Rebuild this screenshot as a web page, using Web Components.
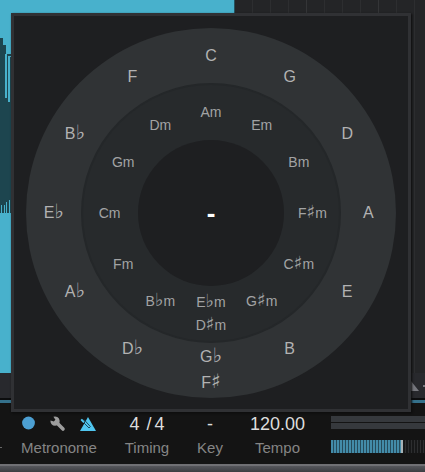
<!DOCTYPE html>
<html lang="en">
<head>
<meta charset="utf-8">
<meta name="viewport" content="width=device-width, initial-scale=1">
<title>Key selector</title>
<style>
html,body{margin:0;height:100%;background:#141414;font-family:"Liberation Sans",Arial,"DejaVu Sans",sans-serif;color:#999}
</style>
</head>
<body>
<daw-window></daw-window>

<script>
class BaseElement extends HTMLElement {
  constructor() {
    super();
    this.attachShadow({ mode: 'open' });
  }
  connectedCallback() { this.shadowRoot.innerHTML = this.render(); }
}

/* Timeline with an audio clip behind the popup */
customElements.define('arrange-view', class extends BaseElement {
  render() {
    return `<style>
      :host{display:flex;flex-direction:column;position:relative;flex:1;min-height:0}
      .track{flex:1;display:flex;min-height:0;background:#242527}
      .clip{flex:0 0 235px;box-sizing:border-box;border-right:1px solid #25525e;background:#48b1cc}
      .grid{flex:1;background:
        repeating-linear-gradient(90deg,transparent 0 71px,#343537 71px 72px),
        repeating-linear-gradient(90deg,#242527 0 17px,#2d2e30 17px 18px)}
      .scroll{height:25px;display:flex;justify-content:flex-end;background:#28292d}
      .line{height:3px;border-top:2px solid #0c0d0e;background:#35718b}
      svg{display:block}
    </style>
    <div class="track">
      <div class="clip"><svg width="12" height="240" shape-rendering="crispEdges" aria-hidden="true">
        <path fill="#1d454f" d="M0 38h3v7h3v9h5v159H0z"/>
        <path fill="#48b1cc" d="M5 54h2v44H5zM8 56h2v46H8zM7 45h1v8H7zM10 56h1v1h-1zM1 205h1v8H1zM4 205h1v8H4zM6 202h1v11H6zM9 200h1v13H9z"/>
      </svg></div>
      <div class="grid"></div>
    </div>
    <div class="scroll"><svg width="16" height="25" aria-hidden="true"><path fill="#77787e" d="M2 8l8 10H2zM14 12h2v2h-2z"/></svg></div>
    <div class="line"></div>
    <slot></slot>`;
  }
});

customElements.define('key-label', class extends BaseElement {
  render() {
    const rows = this.getAttribute('keys').split(',')
      .map(k => `<button>${k.replace(/[♯♭]/, '<span class="accidental">$&</span>')}</button>`).join('');
    return `<style>
      :host{position:absolute;display:flex;flex-direction:column;align-items:center;
        transform:translate(-50%,-50%);
        left:calc(50% + sin(var(--angle)) * var(--radius));
        top:calc(50% - cos(var(--angle)) * var(--radius))}
      button{all:unset;cursor:pointer;white-space:nowrap;font-size:var(--size);height:var(--row);line-height:var(--row)}
      .accidental{font-family:"DejaVu Sans",sans-serif;font-size:var(--accidental);line-height:1px}
    </style>${rows}`;
  }
});

customElements.define('key-wheel', class extends BaseElement {
  render() {
    const major = ['C','G','D','A','E','B','G♭,F♯','D♭','A♭','E♭','B♭','F'];
    const minor = ['Am','Em','Bm','F♯m','C♯m','G♯m','E♭m,D♯m','B♭m','Fm','Cm','Gm','Dm'];
    const ring = list => list.map((k, i) => `<key-label keys="${k}" style="--angle:${i * 30}deg"></key-label>`).join('');
    return `<style>
      :host{display:block;position:relative;width:100%;aspect-ratio:1;color:#b2b2b2}
      svg{display:block;width:100%;height:100%}
      .major{--radius:42.5%;--size:16px;--accidental:20px;--row:26px}
      .minor{--radius:27.4%;--size:14px;--accidental:18px;--row:23px;color:#a2a3a4}
      .major,.minor{display:contents}
      output{position:absolute;inset:0;display:flex;align-items:center;justify-content:center;font-size:26px;font-weight:bold;color:#fff}
      output{pointer-events:none}
    </style>
    <svg viewBox="0 0 370 370" aria-hidden="true">
      <circle cx="185" cy="185" r="185" fill="#303335"/>
      <circle cx="185" cy="185" r="129" fill="#272a2c" stroke="#242729" stroke-width="2"/>
      <circle cx="185" cy="185" r="73" fill="#1e1f21"/>
    </svg>
    <div class="major">${ring(major)}</div>
    <div class="minor">${ring(minor)}</div>
    <output>-</output>`;
  }
});

customElements.define('key-popup', class extends BaseElement {
  render() {
    return `<style>
      :host{position:absolute;z-index:2;left:11px;right:14px;bottom:-9px;box-sizing:border-box;
        padding:12px 12px 11px;border:3px solid #303134;background:#1e1f21;box-shadow:1px 1px 2px #0c0c0c}
    </style><key-wheel></key-wheel>`;
  }
});

/* One transport column: value on top, caption below */
customElements.define('transport-cell', class extends BaseElement {
  render() {
    return `<style>
      :host{display:flex;flex-direction:column;align-items:center}
      .value{display:flex;align-items:center;justify-content:space-between;height:24px;font-size:18px;color:#ddd;white-space:nowrap}
      :host([wide]) .value{align-self:stretch}
      .caption{height:24px;line-height:24px;font-size:15px;color:#858585}
      ::slotted(button){all:unset;cursor:pointer}
    </style>
    <div class="value"><slot></slot></div>
    <div class="caption">${this.getAttribute('caption')}</div>`;
  }
});

customElements.define('metronome-tools', class extends BaseElement {
  render() {
    return `<style>
      :host{display:flex;flex:1;align-items:center;justify-content:space-between;padding:0 2px}
      button{all:unset;cursor:pointer;display:block}
      svg{display:block}
    </style>
    <button aria-label="Metronome on"><svg width="13" height="16"><circle cx="6.5" cy="7" r="6.4" fill="#4c9fd2"/></svg></button>
    <button aria-label="Setup"><svg width="16" height="16">
      <path d="M6 6L13 13" stroke="#9d9d9d" stroke-width="3.6" stroke-linecap="round"/>
      <path d="M3.4 .8A4.6 4.6 0 1 1 .5 4.4L4 5.4 5.4 3.8z" fill="#9d9d9d"/></svg></button>
    <button aria-label="Precount"><svg width="16" height="16">
      <path d="M8 1L16 15H0z" fill="#50c6f0"/>
      <path d="M1 4L9 12L10.4 10.6L4 3.6" fill="none" stroke="#1d4a5c" stroke-width="1"/>
      <path d="M1.2 3.4L4 6.2" stroke="#50c6f0" stroke-width="2"/></svg></button>`;
  }
});

customElements.define('level-display', class extends BaseElement {
  render() {
    return `<style>
      :host{display:block;flex:1;padding-top:4px}
      .bar{height:6px;margin-bottom:1px;background:#36393d}
      .steps{height:13px;margin-top:11px;display:flex}
      .on{width:70px;background:repeating-linear-gradient(90deg,#438ba9 0 2px,#264b5b 2px 3px)}
      .head{width:2px;background:#a9b3b7}
      .off{flex:1;background:repeating-linear-gradient(90deg,#171819 0 2px,#2d2e30 2px 3px)}
    </style>
    <div class="bar"></div><div class="bar"></div>
    <div class="steps"><div class="on"></div><div class="head"></div><div class="off"></div></div>`;
  }
});

customElements.define('transport-bar', class extends BaseElement {
  render() {
    return `<style>
      :host{display:block;background:#141414}
      .cells{display:flex;gap:26px;height:52px;padding:9px 0 0 20px;
        background:linear-gradient(#686868,#686868) 0 44px/2px 1px no-repeat}
      .edge{height:6px;border-top:2px solid #707074;background:linear-gradient(#56575c,#3c3d42)}
      .metronome{min-width:78px}
      .timing{min-width:46px}
      .key{min-width:28px}
      .slash{padding:0 3px 0 7px}
    </style>
    <div class="cells">
      <transport-cell class="metronome" wide caption="Metronome"><metronome-tools></metronome-tools></transport-cell>
      <transport-cell class="timing" caption="Timing"><button>4<span class="slash">/</span>4</button></transport-cell>
      <transport-cell class="key" caption="Key"><button>-</button></transport-cell>
      <transport-cell caption="Tempo"><button>120.00</button></transport-cell>
      <level-display></level-display>
    </div>
    <div class="edge"></div>`;
  }
});

customElements.define('daw-window', class extends BaseElement {
  render() {
    return `<style>
      :host{display:flex;flex-direction:column;height:100vh;overflow:hidden}
    </style>
    <arrange-view><key-popup></key-popup></arrange-view>
    <transport-bar></transport-bar>`;
  }
});
</script>
</body>
</html>
